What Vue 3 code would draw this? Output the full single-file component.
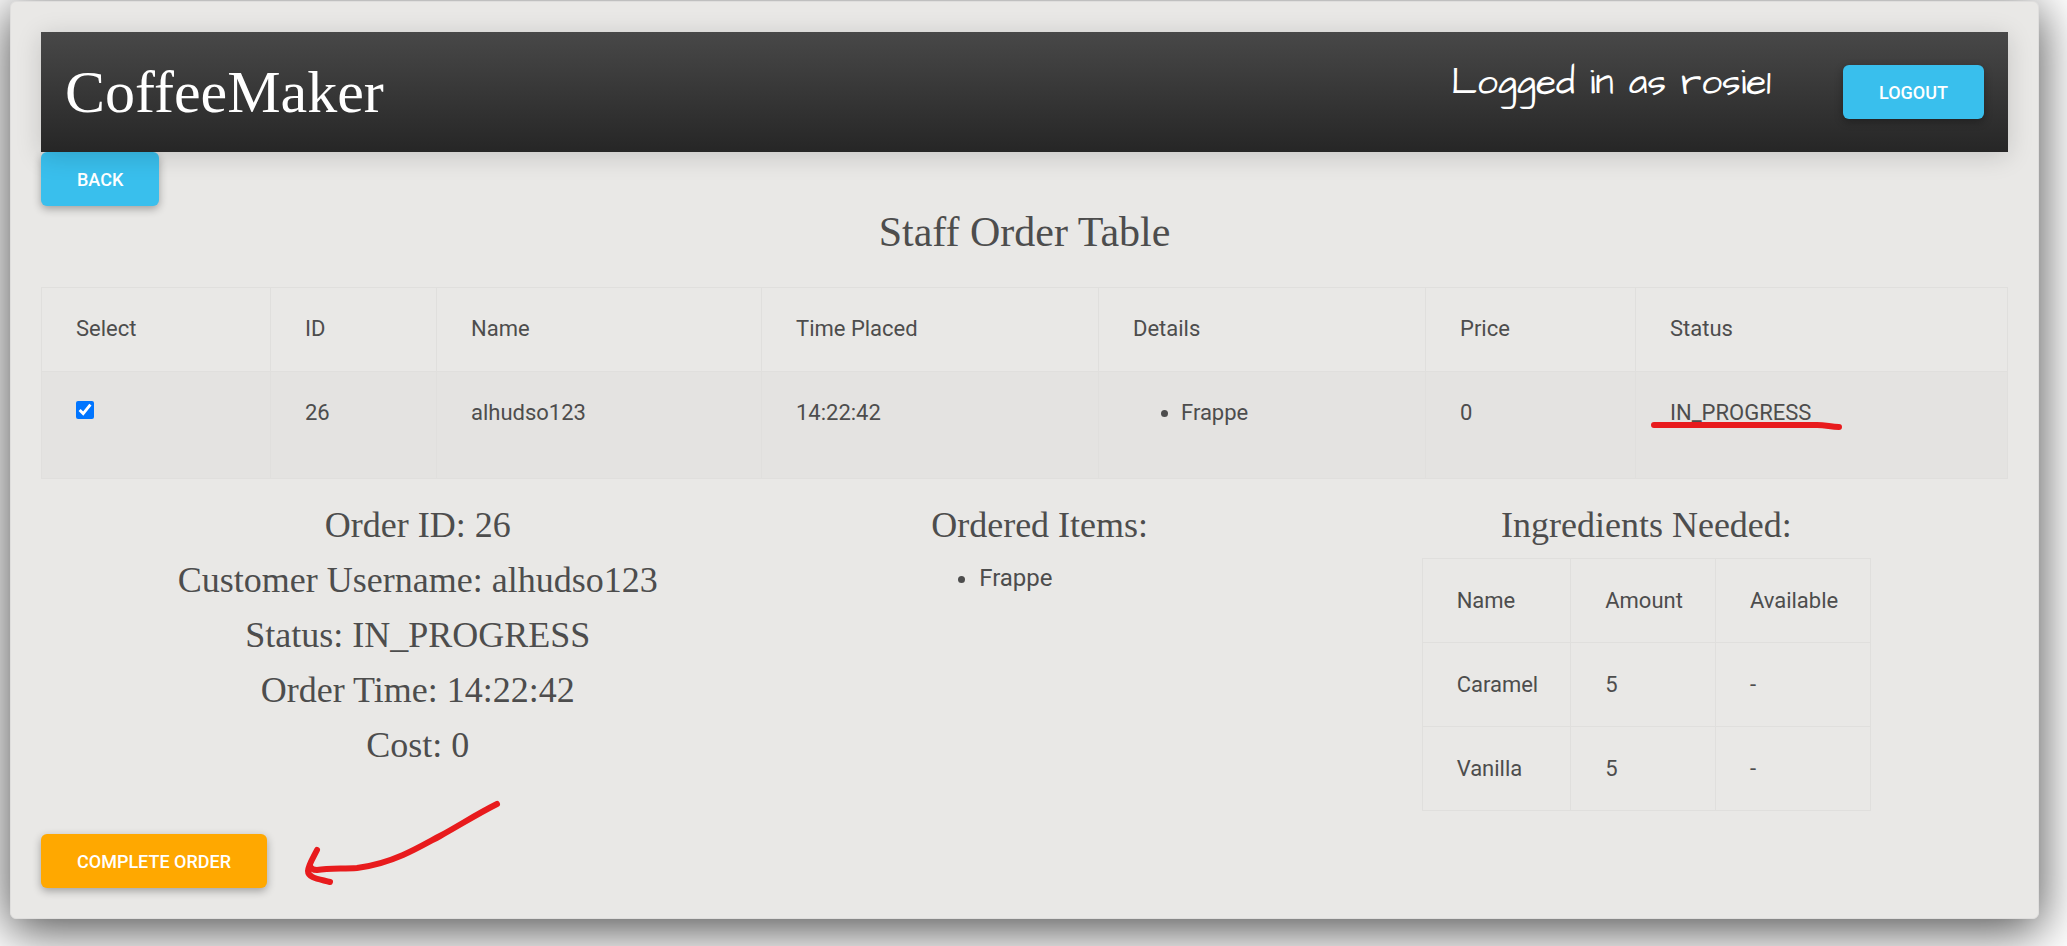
<script setup>
const cols = ['Select', 'ID', 'Name', 'Time Placed', 'Details', 'Price', 'Status']
const summary = ['Order ID: 26', 'Customer Username: alhudso123', 'Status: IN_PROGRESS', 'Order Time: 14:22:42', 'Cost: 0']
const ingredients = [
  { name: 'Caramel', amount: 5, available: '-' },
  { name: 'Vanilla', amount: 5, available: '-' },
]
</script>

<template>
  <main class="card">
    <header class="bar">
      <h1 class="brand">CoffeeMaker</h1>
      <div class="session">
        <p class="user">Logged in as rosie1</p>
        <button class="btn" type="button">LOGOUT</button>
      </div>
    </header>
    <button class="btn back" type="button">BACK</button>
    <h2 class="title">Staff Order Table</h2>

    <table class="grid orders">
      <colgroup>
        <col v-for="(c, i) in cols" :key="c" :class="'c' + i">
      </colgroup>
      <thead>
        <tr><th v-for="c in cols" :key="c" scope="col">{{ c }}</th></tr>
      </thead>
      <tbody>
        <tr class="picked">
          <td><input class="tick" type="checkbox" aria-label="Select order 26" checked></td>
          <td>26</td>
          <td>alhudso123</td>
          <td>14:22:42</td>
          <td><ul class="items"><li>Frappe</li></ul></td>
          <td>0</td>
          <td>
            <span class="marked">IN_PROGRESS
              <svg class="underline" viewBox="0 0 196 14" width="196" height="14" aria-hidden="true">
                <path d="M5 7H168C177 7 182 9 190 9" />
              </svg>
            </span>
          </td>
        </tr>
      </tbody>
    </table>

    <section class="details">
      <div class="summary">
        <h3 v-for="line in summary" :key="line">{{ line }}</h3>
      </div>
      <div>
        <h3>Ordered Items:</h3>
        <ul class="ordered"><li>Frappe</li></ul>
      </div>
      <div>
        <h3>Ingredients Needed:</h3>
        <table class="grid needed">
          <thead>
            <tr><th scope="col">Name</th><th scope="col">Amount</th><th scope="col">Available</th></tr>
          </thead>
          <tbody>
            <tr v-for="row in ingredients" :key="row.name">
              <td>{{ row.name }}</td><td>{{ row.amount }}</td><td>{{ row.available }}</td>
            </tr>
          </tbody>
        </table>
      </div>
    </section>

    <div class="actions">
      <button class="btn complete" type="button">COMPLETE ORDER</button>
      <svg class="arrow" viewBox="0 0 210 90" width="210" height="90" aria-hidden="true">
        <path d="M200 8C180 18 163 29 143 40C130 47 118 54 106 59C90 66 76 70 60 72C46 73 32 72 20 74C16 74 14 73 13 70" />
        <path d="M20 54C16 62 11 70 11 75C11 82 22 83 33 86" />
      </svg>
    </div>
  </main>
</template>

<style>
body { background: #fff; }
</style>

<style scoped>
.card {
  box-sizing: border-box;
  margin: 1px 28px 28px 10px;
  padding: 30px;
  border: 1px solid #dfdedd;
  border-radius: 6px;
  background: #e9e8e6;
  box-shadow: 0 10px 50px 2px #000000b0;
  color: #4d4d4d;
  font: 22px/33px Roboto, "Liberation Sans", sans-serif;
}
.bar {
  display: flex;
  justify-content: space-between;
  align-items: center;
  height: 120px;
  padding: 0 24px;
  background: linear-gradient(#484848, #262626);
  box-shadow: 0 4px 24px #00000028;
  position: relative;
}
h1, h2, h3, p, ul { margin: 0; font-weight: 400; }
.brand { color: #fff; font: 60px/72px "Liberation Serif", serif; }
.session { display: flex; align-items: center; gap: 72px; }
.user {
  padding-bottom: 16px;
  color: #fff;
  font: 37px/48px "Architects Daughter", "Comic Neue", "Comic Sans MS", Lato, sans-serif;
}
.btn {
  display: block;
  height: 54px;
  padding: 2px 36px 0;
  border: 0;
  border-radius: 6px;
  background: #39bfed;
  box-shadow: 0 3px 8px #00000050;
  color: #fff;
  font: 500 18px/52px Roboto, "Liberation Sans", sans-serif;
}
.title { text-align: center; font: 42px/52px "Liberation Serif", serif; }
.orders { width: 100%; table-layout: fixed; margin-top: 29px; }
.grid { border-collapse: collapse; }
.grid th, .grid td {
  padding: 25px 32px 25px 34px;
  border: 1px solid #e0dfdd;
  text-align: left;
  vertical-align: top;
  font-weight: 400;
}
.orders th, .orders td { padding-top: 24px; padding-bottom: 26px; }
.c0 { width: 229px; }
.c1 { width: 166px; }
.c2 { width: 325px; }
.c3 { width: 337px; }
.c4 { width: 327px; }
.c5 { width: 210px; }
.picked { background: #e4e3e1; }
.tick { display: block; width: 18px; height: 18px; margin: 5px 0 0; accent-color: #0075ff; }
.items { margin-bottom: 23px; padding-left: 48px; }
.marked { position: relative; }
.underline { position: absolute; left: -21px; top: 18px; }
.underline path, .arrow path {
  fill: none;
  stroke: #e81b1d;
  stroke-width: 6;
  stroke-linecap: round;
  stroke-linejoin: round;
}
.details { display: flex; justify-content: space-around; padding-top: 19px; }
h3 { font: 36px/55px "Liberation Serif", serif; text-align: center; }
.ordered { padding-left: 48px; font-size: 24px; line-height: 50px; }
.needed { margin-top: 5px; }
.actions { position: relative; margin-top: 23px; }
.complete { background: #ffa800; }
.arrow { position: absolute; left: 256px; top: -38px; }
</style>
